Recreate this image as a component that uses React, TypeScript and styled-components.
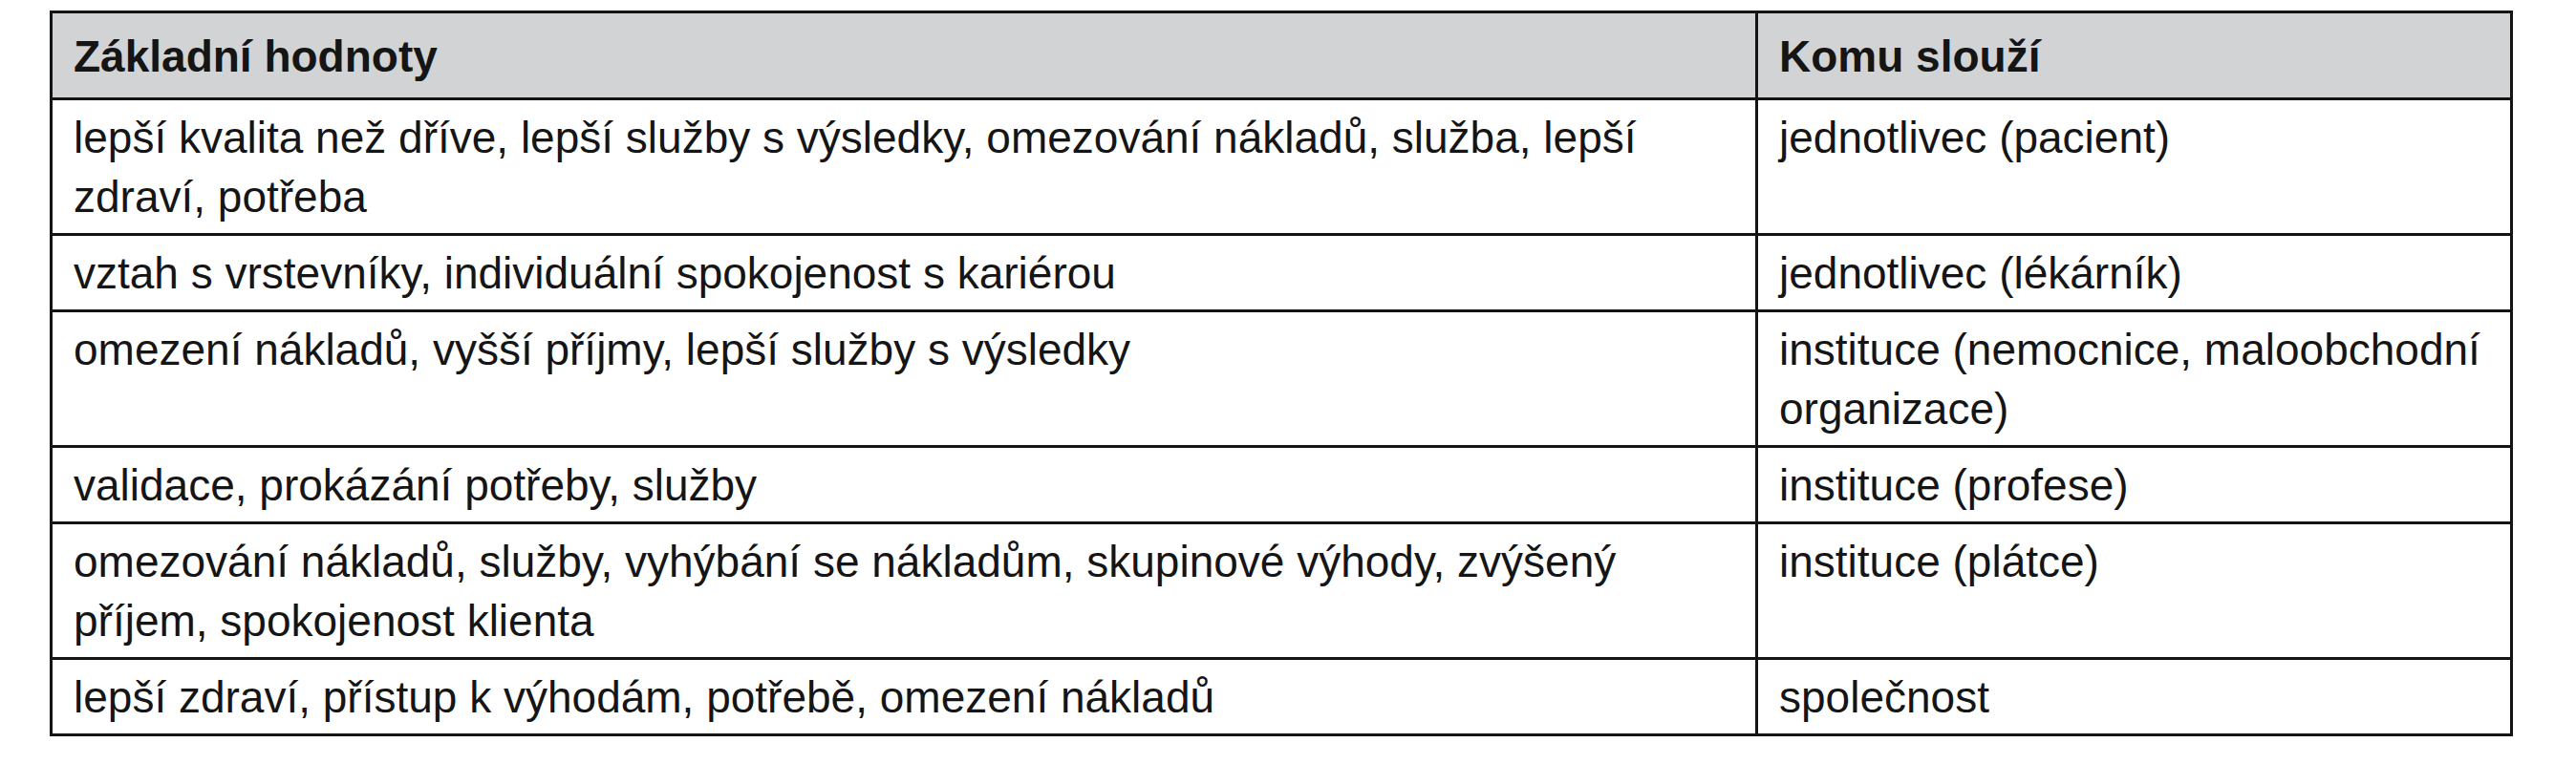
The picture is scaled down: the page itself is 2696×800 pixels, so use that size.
import styled, { createGlobalStyle } from "styled-components";

const rows = [
  {
    values:
      "lepší kvalita než dříve, lepší služby s výsledky, omezování nákladů, služba, lepší zdraví, potřeba",
    who: "jednotlivec (pacient)",
  },
  {
    values: "vztah s vrstevníky, individuální spokojenost s kariérou",
    who: "jednotlivec (lékárník)",
  },
  {
    values: "omezení nákladů, vyšší příjmy, lepší služby s výsledky",
    who: "instituce (nemocnice, maloobchodní organizace)",
  },
  {
    values: "validace, prokázání potřeby, služby",
    who: "instituce (profese)",
  },
  {
    values:
      "omezování nákladů, služby, vyhýbání se nákladům, skupinové výhody, zvýšený příjem, spokojenost klienta",
    who: "instituce (plátce)",
  },
  {
    values: "lepší zdraví, přístup k výhodám, potřebě, omezení nákladů",
    who: "společnost",
  },
];

const App = () => {
  return (
    <Page>
      <GlobalStyle />
      <Table>
        <Row $head>
          <Cell $head>Základní hodnoty</Cell>
          <Cell $head>Komu slouží</Cell>
        </Row>
        {rows.map((r) => (
          <Row key={r.who}>
            <Cell>{r.values}</Cell>
            <Cell>{r.who}</Cell>
          </Row>
        ))}
      </Table>
    </Page>
  );
};

export default App;

const GlobalStyle = createGlobalStyle`
  body {
    margin: 0;
    background: #fff;
  }
`;

const Page = styled.div`
  width: 2696px;
  height: 800px;
  padding: 11px 0 0 52px;
  box-sizing: border-box;
  background: #fff;
  font-family: "Liberation Sans", Arial, sans-serif;
`;

const Table = styled.div`
  width: 2578px;
  box-sizing: border-box;
  border: 3px solid #141414;
`;

const Row = styled.div<{ $head?: boolean }>`
  display: grid;
  grid-template-columns: 1782px 1fr;
  background: ${(p) => (p.$head ? "#d1d3d4" : "#fff")};

  & + & {
    border-top: 3px solid #141414;
  }
`;

const Cell = styled.div<{ $head?: boolean }>`
  padding: ${(p) => (p.$head ? "14px 16px 12px 22px" : "8px 16px 7px 22px")};
  font-size: 46px;
  line-height: 62px;
  font-weight: ${(p) => (p.$head ? 700 : 400)};
  color: #151515;

  & + & {
    border-left: 3px solid #141414;
  }
`;
